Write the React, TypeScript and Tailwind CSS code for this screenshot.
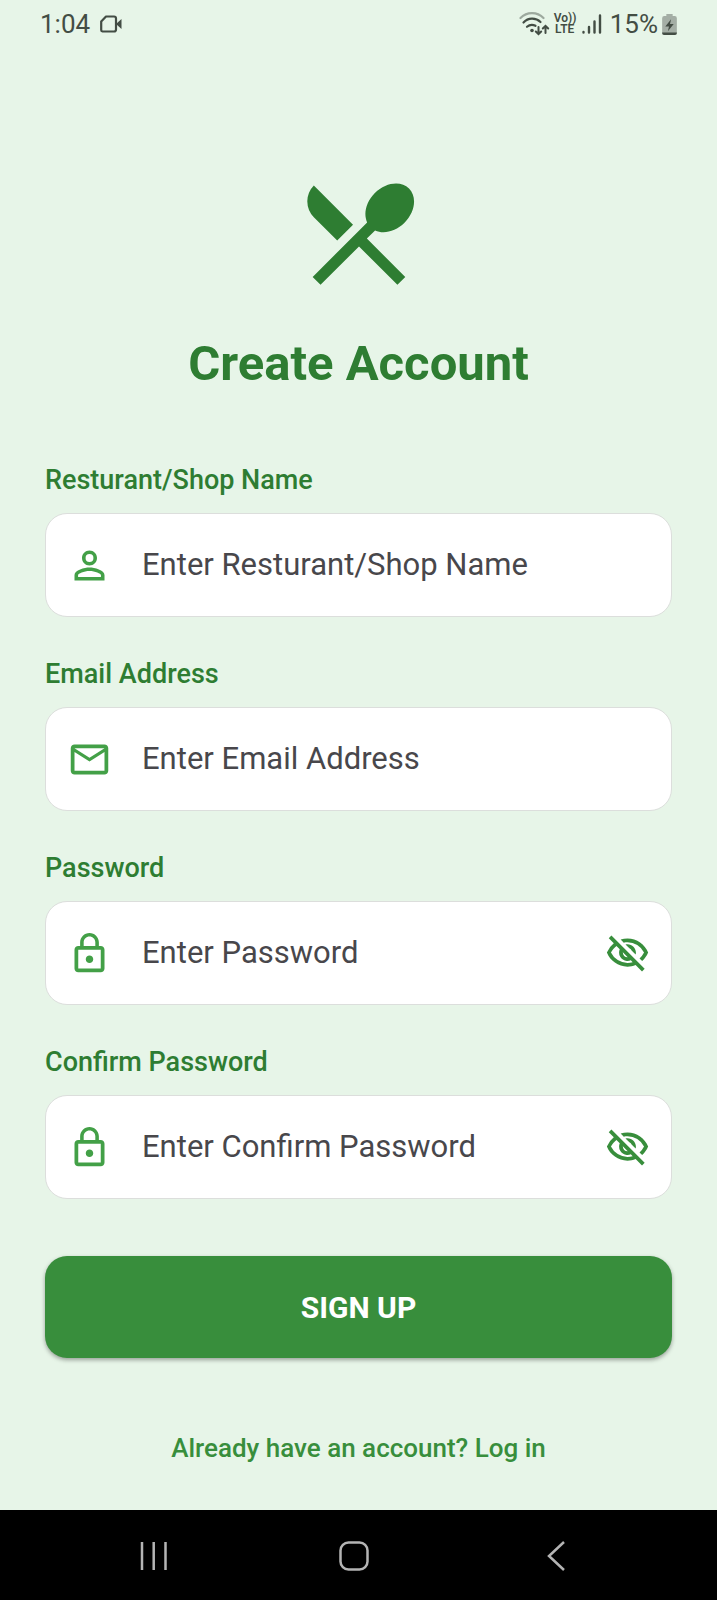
import React, { useState } from "react";
import type { IconType } from "react-icons";
import {
    MdLockOutline,
    MdMailOutline,
    MdOutlineVisibility,
    MdOutlineVisibilityOff,
    MdPersonOutline,
    MdRestaurantMenu,
} from "react-icons/md";

interface Field {
    id: string;
    label: string;
    placeholder: string;
    type: "text" | "email" | "password";
    icon: IconType;
}

const fields: Field[] = [
    { id: "name", label: "Resturant/Shop Name", placeholder: "Enter Resturant/Shop Name", type: "text", icon: MdPersonOutline },
    { id: "email", label: "Email Address", placeholder: "Enter Email Address", type: "email", icon: MdMailOutline },
    { id: "password", label: "Password", placeholder: "Enter Password", type: "password", icon: MdLockOutline },
    { id: "confirm", label: "Confirm Password", placeholder: "Enter Confirm Password", type: "password", icon: MdLockOutline },
];

const StatusBar: React.FC = () => (
    <header className="flex h-12 items-center justify-between px-10 text-[26px] leading-8 text-[#434d44]">
        <div className="flex items-center gap-2.5">
            <span>1:04</span>
            <svg width="22" height="18" viewBox="0 0 22 18" fill="none" stroke="currentColor" strokeWidth="2.2" aria-hidden="true">
                <path d="M6 1.5h8a2 2 0 0 1 2 2v11a2 2 0 0 1-2 2H2.500A1.500 1.500 0 0 1 1.200 15V6.500z" strokeLinejoin="round" />
                <path d="M16 9l5.500-5v10z" fill="currentColor" stroke="none" />
            </svg>
        </div>
        <div className="flex items-center">
            <svg width="31" height="24" viewBox="0 0 31 24" fill="none" stroke="currentColor" strokeWidth="2.2" strokeLinecap="round" aria-hidden="true">
                <path d="M1.500 6a16 16 0 0 1 23 0" opacity="0.45" />
                <path d="M4.500 10.500a12 12 0 0 1 17-.5" />
                <path d="M8 14.800a7.500 7.500 0 0 1 8.500-1" />
                <circle cx="13" cy="18.500" r="1.800" fill="currentColor" stroke="none" />
                <path d="M19.500 15v7M16.800 19.500l2.700 2.700 2.700-2.700M26.500 21v-7M23.800 16.500l2.700-2.700 2.700 2.700" strokeWidth="2" />
            </svg>
            <span className="ml-1 w-[22px] text-center text-[12px] font-semibold leading-[11px]">
                Vo))
                <br />
                LTE
            </span>
            <svg className="ml-1.5" width="20" height="20" viewBox="0 0 20 20" stroke="currentColor" strokeWidth="2.4" strokeLinecap="round" aria-hidden="true">
                <path d="M1.500 18v.500M7 13v5.500M12.500 7.500v11M18 1.500v17" />
            </svg>
            <span className="ml-2">15%</span>
            <svg className="ml-1" width="15" height="21" viewBox="0 0 14 20" aria-hidden="true">
                <path d="M4 0h6v2h2a2 2 0 0 1 2 2v14a2 2 0 0 1-2 2H2a2 2 0 0 1-2-2V4a2 2 0 0 1 2-2h2z" fill="#a4aea5" />
                <path d="M0 17.500h14v.5a2 2 0 0 1-2 2H2a2 2 0 0 1-2-2z" fill="#434d44" />
                <path d="M8.500 5L3 12h3.500l-1 4.500L11 9.500H7.500z" fill="#434d44" />
            </svg>
        </div>
    </header>
);

const FormField: React.FC<{ field: Field }> = ({ field }) => {
    const [visible, setVisible] = useState(false);
    const Icon = field.icon;
    const isPassword = field.type === "password";

    return (
        <div className="flex flex-col gap-[18px]">
            <label htmlFor={field.id} className="text-[27px] font-medium leading-[30px] text-[#2e7d32]">
                {field.label}
            </label>
            <div className="flex h-[104px] items-center rounded-[22px] border border-[#dcdedc] bg-white px-[21px]">
                <Icon className="size-[45px] shrink-0 text-[#43a047]" aria-hidden="true" />
                <input
                    id={field.id}
                    type={isPassword && visible ? "text" : field.type}
                    placeholder={field.placeholder}
                    className="ml-[30px] h-full min-w-0 flex-1 bg-transparent pb-0.5 text-[31px] text-[#49454f] outline-none placeholder:text-[#48474b]"
                />
                {isPassword && (
                    <button
                        type="button"
                        aria-label={visible ? "Hide password" : "Show password"}
                        onClick={() => setVisible(!visible)}
                        className="shrink-0 text-[#388e3c]"
                    >
                        {visible ? <MdOutlineVisibility className="size-[45px]" /> : <MdOutlineVisibilityOff className="size-[45px]" />}
                    </button>
                )}
            </div>
        </div>
    );
};

const NavigationBar: React.FC = () => (
    <nav className="grid h-[90px] grid-cols-3 items-center justify-items-center bg-black pl-[54px] pr-[62px] pt-0.5 text-[#b4b4b4]">
        <button type="button" aria-label="Recent apps">
            <svg width="30" height="30" viewBox="0 0 30 30" stroke="currentColor" strokeWidth="2.500">
                <path d="M3 1v28M14.700 1v28M26.500 1v28" />
            </svg>
        </button>
        <button type="button" aria-label="Home">
            <svg width="30" height="30" viewBox="0 0 30 30" fill="none" stroke="currentColor" strokeWidth="2.500">
                <rect x="1.500" y="1.500" width="27" height="27" rx="8" />
            </svg>
        </button>
        <button type="button" aria-label="Back">
            <svg width="30" height="30" viewBox="0 0 30 30" fill="none" stroke="currentColor" strokeWidth="2.500">
                <path d="M24 1L9 15l15 14" />
            </svg>
        </button>
    </nav>
);

export default function App() {
    return (
        <div className="flex min-h-screen flex-col bg-[#e7f5e8] font-[Roboto,sans-serif]">
            <StatusBar />
            <main className="flex flex-1 flex-col px-[45px] pb-[46px] pt-[118px]">
                <MdRestaurantMenu className="size-[134px] self-center text-[#2e7d32]" aria-hidden="true" />
                <h1 className="mt-9 text-center text-[49px] font-bold leading-[56px] text-[#2e7d32]">Create Account</h1>
                <form className="mt-[73px] flex flex-col" onSubmit={(e) => e.preventDefault()}>
                    <div className="flex flex-col gap-[42px]">
                        {fields.map((field) => (
                            <FormField key={field.id} field={field} />
                        ))}
                    </div>
                    <button
                        type="submit"
                        className="mt-[57px] h-[102px] rounded-[22px] bg-[#388e3c] text-[30px] font-bold text-white shadow-[0_2px_4px_rgba(0,0,0,0.35)]"
                    >
                        SIGN UP
                    </button>
                </form>
                <a href="#login" className="mt-[75px] self-center text-[26px] font-medium leading-[30px] text-[#388e3c]">
                    Already have an account? Log in
                </a>
            </main>
            <NavigationBar />
        </div>
    );
}
